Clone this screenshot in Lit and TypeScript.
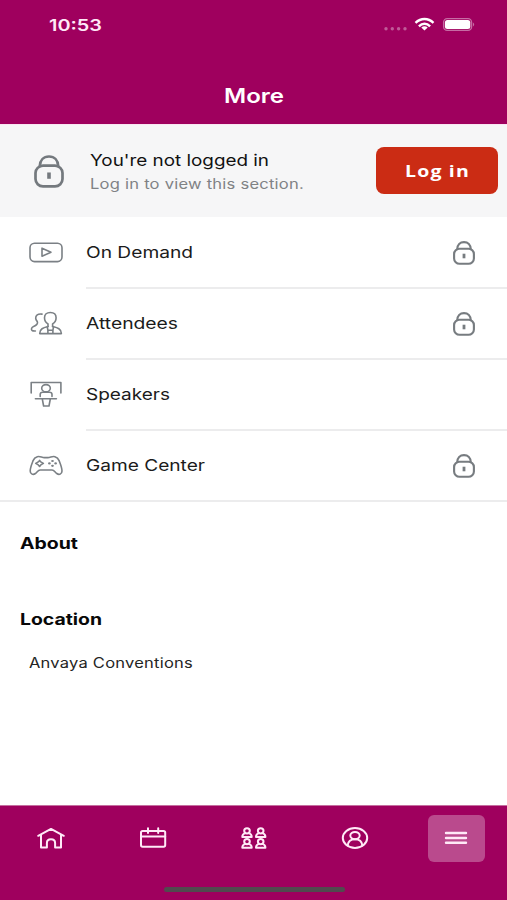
import { LitElement, html, css, svg, nothing } from "lit";
import { customElement, property } from "lit/decorators.js";

/** One line of text, stretched horizontally to a given width. */
@customElement("wide-text")
class WideText extends LitElement {
  @property({ type: Number }) width = 100;

  static styles = css`
    :host { display: block; white-space: nowrap; text-align: left; }
    .line { display: inline-block; transform-origin: 0 50%; }
  `;

  render() {
    return html`<span class="line"><slot></slot></span>`;
  }

  firstUpdated() {
    const line = this.renderRoot.querySelector(".line") as HTMLElement;
    this.style.width = `${this.width}px`;
    const natural = line.getBoundingClientRect().width;
    if (natural > 0) line.style.transform = `scaleX(${this.width / natural})`;
  }
}

const lock = (cls: string) => html`
  <svg class=${cls} viewBox="0 0 30 34" preserveAspectRatio="none">
    <rect x="1.5" y="11" width="27" height="21.3" rx="7.5" />
    <path d="M5.8 11.5C6 5.5 9.6 1.6 15 1.6S24 5.5 24.2 11.5" />
    <path class="keyhole" d="M15 18v6.500" />
  </svg>`;

const icons = {
  demand: svg`<rect x="1" y="5.2" width="32" height="18.4" rx="4.5" />
    <path d="M13 10.2v8l9-4z" />`,
  attendees: svg`
    <path d="M19 17.500v-2.600c-2-1.300-3.500-3.500-3.500-6.200 0-3.200 2.300-5.200 5.800-5.200s5.800 2 5.800 5.200c0 2.700-1.500 4.900-3.500 6.200v2.600" />
    <path d="M19 17.500c-4.800 1.300-8.300 2.300-8.300 7.100h21.700c0-4.800-4-5.800-8.800-7.100" />
    <path d="M18.300 18l.6 3.300h5l.6-3.300M18.900 21.500v2.800M23.900 21.500v2.800" />
    <path d="M13 5.100c-4.200-.6-6.500 1.300-6.300 4.300.1 1.400.8 2.300 1.600 3.200.9 2-.9 3.800-3.700 4.800-2 .8-2.700 2.800-1.600 4 .7.700 1.700.6 3.400.6" />`,
  speakers: svg`<path d="M2.200 13V2.500h29.700V13" />
    <ellipse cx="17" cy="8.200" rx="4.300" ry="3.600" />
    <path d="M11.200 16.500v-2c0-1.500 1-2.200 2.500-2.200h6.800c1.500 0 2.500.7 2.500 2.200v2" />
    <path d="M6.400 18.700h21M13.300 19l1.300 7h5.400l1.300-7" />`,
  game: svg`<path d="M8.300 5.700c2.600-.8 4.500.9 7 .9h3.600c2.500 0 4.400-1.700 7-.9 2.100.6 3.300 1.600 4.200 3.900 1.300 3.400 2.900 7 2.900 10.300 0 3.400-3 4.300-5.200 2.600-1.900-1.500-2.600-3.500-4.800-3.500H11.200c-2.200 0-2.900 2-4.800 3.500-2.200 1.700-5.200.8-5.200-2.600 0-3.300 1.600-6.900 2.900-10.300.9-2.300 2.100-3.300 4.200-3.900z" />
    <path d="M10.600 9.400l1.200 1.500 2.600 1.500-2.600 1.500-1.200 1.500-1.300-1.500-2.600-1.500 2.600-1.500z" />
    <g class="dots"><ellipse cx="23.500" cy="10" rx="1.400" ry="1.100" /><ellipse cx="23.500" cy="14.800" rx="1.400" ry="1.100" />
    <ellipse cx="20.400" cy="12.400" rx="1.400" ry="1.100" /><ellipse cx="26.600" cy="12.400" rx="1.400" ry="1.100" /></g>`,
};

const rows = [
  { label: "On Demand", width: 107, icon: icons.demand, locked: true },
  { label: "Attendees", width: 92, icon: icons.attendees, locked: true },
  { label: "Speakers", width: 84, icon: icons.speakers, locked: false },
  { label: "Game Center", width: 119, icon: icons.game, locked: true },
];

const person = (x: number, y: number) => svg`
  <g transform="translate(${x} ${y})">
    <ellipse cx="5" cy="3.200" rx="2.800" ry="2.600" />
    <path d="M3.200 5.500C1.500 6 .3 7.200.3 9.300h9.400C9.700 7.200 8.500 6 6.800 5.500" />
  </g>`;

const tabs = [
  svg`<path d="M2.200 8.800L15 1.900l12.800 6.900M5 8v12.600h5.900v-4.700c0-4.800 8.200-4.800 8.200 0v4.700H25V8" />`,
  svg`<rect x="3" y="4" width="24.200" height="15.700" rx="1.600" />
    <path d="M3 9.400h24.200M10 1.200v4.800M20.200 1.200v4.800" />`,
  svg`${person(3, 0.600)}${person(16.700, 0.600)}${person(3, 11.400)}${person(16.700, 11.400)}`,
  svg`<ellipse cx="14" cy="11" rx="12.200" ry="9.900" />
    <ellipse cx="14" cy="8.600" rx="4.700" ry="3.700" />
    <path d="M6.600 18.500c.5-3.800 3.300-6.200 7.400-6.200s6.900 2.400 7.400 6.200" />`,
  svg`<path class="bars" d="M4 6h20M4 11h20M4 15.800h20" />`,
];

@customElement("app-root")
class AppRoot extends LitElement {
  static styles = css`
    * { box-sizing: border-box; }
    :host {
      display: flex; flex-direction: column; width: 507px; height: 900px;
      overflow: hidden; background: #fff; color: #1b1b1b;
      font-family: Inter, "Liberation Sans", sans-serif;
    }
    svg { display: block; fill: none; stroke-linecap: round; stroke-linejoin: round; flex: none; overflow: visible; }
    header { height: 124px; background: #9f005e; color: #fff; }
    .status {
      height: 49px; padding: 0 33px 0 49px; display: flex; align-items: center;
      font-size: 16px; font-weight: 600; color: #ffe9f7;
    }
    .signals { margin: -2px 0 0 auto; width: 92px; height: 16px; }
    .title { height: 75px; display: flex; justify-content: center; padding: 35px 0 0 1px;
      font-size: 20px; line-height: 24px; font-weight: 600; }
    .banner {
      height: 93px; background: #f6f6f7; border-top: 1px solid #f9e6f2;
      display: flex; align-items: center; padding: 0 9px 0 34px;
    }
    .lock-large { width: 30px; height: 33px; stroke: #74797e; stroke-width: 2.700; margin-top: 1px; }
    .keyhole { stroke-width: 3.600; stroke-linecap: butt; }
    .message { margin: 2px 0 0 26px; flex: 1; }
    .message-title { font-size: 16px; line-height: 24px; color: #111; }
    .message-sub { font-size: 14px; line-height: 24px; color: #808285; letter-spacing: .2px; }
    .login {
      width: 122px; height: 47px; margin-top: -1px; border: 0; border-radius: 8px; background: #cb2c14; color: #fff;
      display: flex; align-items: center; justify-content: center; padding: 0;
      font: 700 16.5px "Open Sans", sans-serif; letter-spacing: 1px;
    }
    .row { height: 71px; display: flex; padding-left: 29px; }
    .row-icon { width: 34px; height: 29px; margin: 21px 23px 0 0; stroke: #7b8085; stroke-width: 1.600; }
    .dots { stroke: none; fill: #7b8085; }
    .row-body {
      flex: 1; display: flex; justify-content: space-between; align-items: center;
      border-bottom: 2px solid #ececed; padding: 0 32px 0 0; font-size: 16px; height: 72px;
    }
    .row:last-child { border-bottom: 2px solid #ececed; height: 72px; }
    .row:last-child .row-body { border-bottom-color: transparent; }
    .lock-small { width: 22px; height: 24px; stroke: #777c80; stroke-width: 2.900; margin-top: 2px; }
    .lock-small .keyhole { stroke-width: 3.800; }
    .info { flex: 1; padding: 29px 20px 0; }
    h2 { margin: 0; font-size: 16px; line-height: 24px; font-weight: 700; color: #080808; }
    .location { margin-top: 52px; }
    .venue { padding: 20px 0 0 9px; font-size: 14px; line-height: 24px; color: #242424; letter-spacing: .2px; }
    footer { height: 95px; background: #9f005e; border-top: 1px solid #c56e9f; display: flex;
      flex-direction: column; align-items: center; }
    nav { display: flex; justify-content: space-between; width: 100%; padding: 9px 22px 0; }
    .tab { width: 57px; height: 47px; border-radius: 6px; display: flex; align-items: center; justify-content: center; }
    .tab svg { width: 29px; height: 22px; stroke: #ffeaf7; stroke-width: 2; margin-top: -1px; }
    .tab .bars { stroke-width: 2.400; }
    .active { background: #ba4a8d; }
    .home-bar { width: 181px; height: 5px; border-radius: 3px; background: #514a4e; margin: 25px 0 0 1px; }
  `;

  render() {
    return html`
      <header>
        <div class="status">
          <wide-text width="53">10:53</wide-text>
          <svg class="signals" viewBox="0 0 92 16">
            <g fill="#c05b98">
              <circle cx="4" cy="12.700" r="1.700" /><circle cx="10.300" cy="12.700" r="1.700" />
              <circle cx="16.600" cy="12.700" r="1.700" /><circle cx="23" cy="12.700" r="1.700" />
            </g>
            <g stroke="#fff" stroke-width="2.400" stroke-linecap="butt">
              <path d="M33.500 6.800C38.900 1.700 46.100 1.700 51.500 6.800" />
              <path d="M36.900 10.300C40.300 6.900 44.700 6.900 48.100 10.300" />
            </g>
            <path fill="#fff" d="M39.300 11.500c2-1.800 4.400-1.800 6.400 0l-3.200 3z" />
            <rect x="61.600" y="2.600" width="28" height="11.800" rx="3.600" stroke="#c66ca4" stroke-width="1.300" />
            <rect x="62.900" y="3.900" width="25.400" height="9.200" rx="2.500" fill="#fff" />
            <path fill="#c66ca4" d="M91 6.500q2.400 2 0 4z" />
          </svg>
        </div>
        <div class="title"><wide-text width="60">More</wide-text></div>
      </header>
      <section class="banner">
        ${lock("lock-large")}
        <div class="message">
          <wide-text class="message-title" width="179">You're not logged in</wide-text>
          <wide-text class="message-sub" width="214">Log in to view this section.</wide-text>
        </div>
        <button class="login"><wide-text width="65">Log in</wide-text></button>
      </section>
      <section>
        ${rows.map((row) => html`
          <div class="row">
            <svg class="row-icon" viewBox="0 0 34 29">${row.icon}</svg>
            <div class="row-body">
              <wide-text width=${row.width}>${row.label}</wide-text>
              ${row.locked ? lock("lock-small") : nothing}
            </div>
          </div>`)}
      </section>
      <section class="info">
        <h2><wide-text width="58">About</wide-text></h2>
        <h2 class="location"><wide-text width="82">Location</wide-text></h2>
        <div class="venue"><wide-text width="164">Anvaya Conventions</wide-text></div>
      </section>
      <footer>
        <nav>
          ${tabs.map((icon, i) => html`
            <div class="tab ${i === 4 ? "active" : ""}">
              <svg viewBox="0 0 29 22">${icon}</svg>
            </div>`)}
        </nav>
        <div class="home-bar"></div>
      </footer>
    `;
  }
}
